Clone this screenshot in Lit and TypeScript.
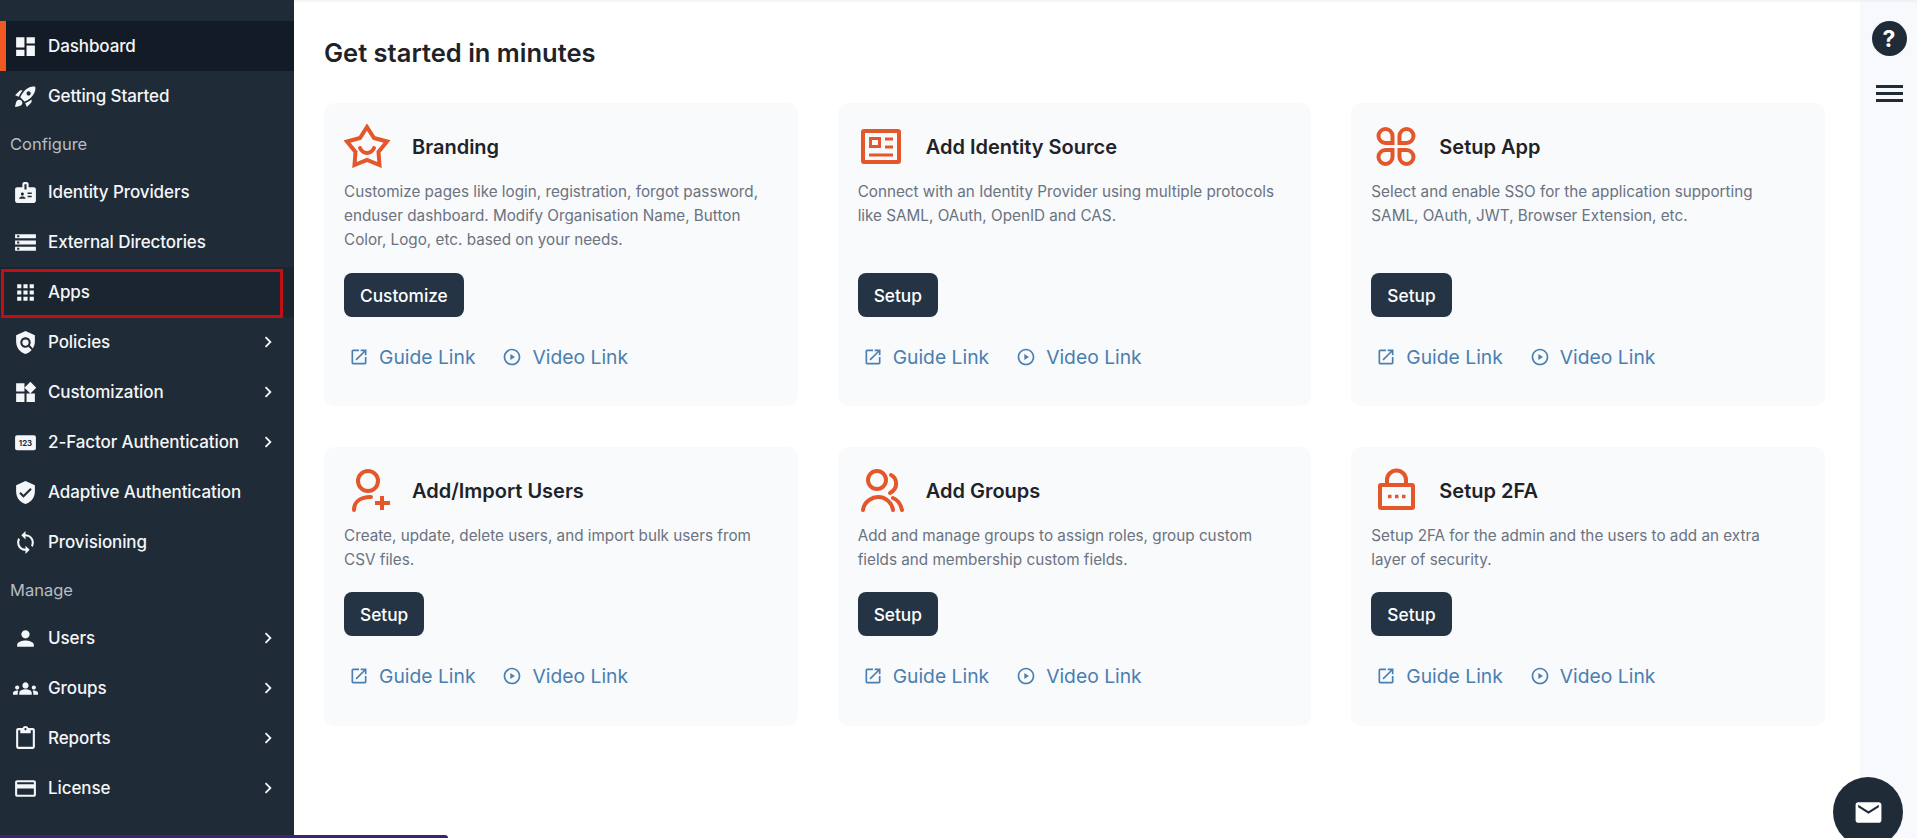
import { LitElement, html, css, svg } from 'lit';
import { customElement } from 'lit/decorators.js';

// material style nav icons, 24 box
const p = (d: string) => svg`<path d=${d}></path>`;
const navIcons: Record<string, unknown> = {
  dashboard: p('M3 13h8V3H3v10zm0 8h8v-6H3v6zm10 0h8V11h-8v10zm0-18v6h8V3h-8z'),
  rocket: p('M9.19 6.35c-2.04 2.29-3.44 5.58-3.57 5.89L2 10.69l4.05-4.05c.47-.47 1.15-.68 1.81-.55l1.33.26zM11.17 17s3.74-1.55 5.89-3.7c5.4-5.4 4.5-9.62 4.21-10.57-.95-.3-5.17-1.19-10.57 4.21C8.55 9.09 7 12.83 7 12.83L11.17 17zm6.48-2.19c-2.29 2.04-5.58 3.44-5.89 3.57L13.31 22l4.05-4.05c.47-.47.68-1.15.55-1.81l-.26-1.33zM9 18c0 .83-.34 1.58-.88 2.12C6.94 21.3 2 22 2 22s.7-4.94 1.88-6.12C4.42 15.34 5.17 15 6 15c1.66 0 3 1.34 3 3zm4-9c0-1.1.9-2 2-2s2 .9 2 2-.9 2-2 2-2-.9-2-2z'),
  badge: p('M20 7h-5V4c0-1.1-.9-2-2-2h-2c-1.1 0-2 .9-2 2v3H4c-1.1 0-2 .9-2 2v11c0 1.1.9 2 2 2h16c1.1 0 2-.9 2-2V9c0-1.1-.9-2-2-2zM9 12c.83 0 1.5.67 1.5 1.5S9.83 15 9 15s-1.5-.67-1.5-1.5S8.17 12 9 12zm3 6H6v-.75c0-1 2-1.5 3-1.5s3 .5 3 1.5V18zm1-9h-2V4h2v5zm5 7.5h-4V15h4v1.5zm0-3h-4V12h4v1.5z'),
  storage: p('M2 20h20v-4H2v4zm2-3h2v2H4v-2zM2 4v4h20V4H2zm4 3H4V5h2v2zm-4 7h20v-4H2v4zm2-3h2v2H4v-2z'),
  apps: p('M4 8h4V4H4v4zm6 12h4v-4h-4v4zm-6 0h4v-4H4v4zm0-6h4v-4H4v4zm6 0h4v-4h-4v4zm6-10v4h4V4h-4zm-6 4h4V4h-4v4zm6 6h4v-4h-4v4zm0 6h4v-4h-4v4z'),
  policy: svg`<path d="M21 5l-9-4-9 4v6c0 5.55 3.84 10.74 9 12 2.3-.56 4.33-1.9 5.88-3.71l-3.12-3.12c-1.94 1.29-4.58 1.07-6.29-.64-1.95-1.95-1.95-5.12 0-7.07 1.95-1.95 5.12-1.95 7.07 0 1.71 1.71 1.92 4.35.64 6.29l2.9 2.9C20.29 15.69 21 13.38 21 11V5z"></path><circle cx="12" cy="12" r="3"></circle>`,
  widgets: p('M13 13v8h8v-8h-8zM3 21h8v-8H3v8zM3 3v8h8V3H3zm13.66-1.31L11 7.34 16.66 13l5.66-5.66-5.66-5.65z'),
  pin: svg`<rect x="2" y="5" width="20" height="14.5" rx="2"></rect><text x="12" y="15" text-anchor="middle" font-size="7.5" font-weight="700" fill="#1f2b37" font-family="Inter, sans-serif">123</text>`,
  verified: p('M12 1L3 5v6c0 5.55 3.84 10.74 9 12 5.16-1.26 9-6.45 9-12V5l-9-4zm-2 16l-4-4 1.41-1.41L10 14.17l6.59-6.59L18 9l-8 8z'),
  sync: p('M12 4V1L8 5l4 4V6c3.31 0 6 2.69 6 6 0 1.01-.25 1.97-.7 2.8l1.46 1.46C19.54 15.03 20 13.57 20 12c0-4.42-3.58-8-8-8zm0 14c-3.31 0-6-2.69-6-6 0-1.01.25-1.97.7-2.8L5.24 7.74C4.46 8.97 4 10.43 4 12c0 4.42 3.58 8 8 8v3l4-4-4-4v3z'),
  person: p('M12 12c2.21 0 4-1.79 4-4s-1.79-4-4-4-4 1.79-4 4 1.79 4 4 4zm0 2c-2.67 0-8 1.34-8 4v2h16v-2c0-2.66-5.33-4-8-4z'),
  groups: p('M12 12.75c1.63 0 3.07.39 4.24.9 1.08.48 1.76 1.56 1.76 2.73V18H6v-1.61c0-1.18.68-2.26 1.76-2.73 1.17-.52 2.61-.91 4.24-.91zM4 13c1.1 0 2-.9 2-2s-.9-2-2-2-2 .9-2 2 .9 2 2 2zm1.13 1.1C4.76 14.04 4.39 14 4 14c-.99 0-1.93.21-2.78.58C.48 14.9 0 15.62 0 16.43V18h4.5v-1.61c0-.83.23-1.61.63-2.29zM20 13c1.1 0 2-.9 2-2s-.9-2-2-2-2 .9-2 2 .9 2 2 2zm4 3.43c0-.81-.48-1.53-1.22-1.85-.85-.37-1.79-.58-2.78-.58-.39 0-.76.04-1.13.1.4.68.63 1.46.63 2.29V18H24v-1.57zM12 6c1.66 0 3 1.34 3 3s-1.34 3-3 3-3-1.34-3-3 1.34-3 3-3z'),
  report: p('M19 2h-4.18C14.4.84 13.3 0 12 0c-1.3 0-2.4.84-2.82 2H5c-1.1 0-2 .9-2 2v16c0 1.1.9 2 2 2h14c1.1 0 2-.9 2-2V4c0-1.1-.9-2-2-2zm-7 0c.55 0 1 .45 1 1s-.45 1-1 1-1-.45-1-1 .45-1 1-1zm7 18H5V4h2v3h10V4h2v16z'),
  card: p('M20 4H4c-1.11 0-1.99.89-1.99 2L2 18c0 1.11.89 2 2 2h16c1.11 0 2-.89 2-2V6c0-1.11-.89-2-2-2zm0 14H4v-6h16v6zm0-10H4V6h16v2z'),
};

type NavEntry =
  | { heading: string }
  | { label: string; icon: string; more?: boolean; active?: boolean; marked?: boolean };

const nav: NavEntry[] = [
  { label: 'Dashboard', icon: 'dashboard', active: true },
  { label: 'Getting Started', icon: 'rocket' },
  { heading: 'Configure' },
  { label: 'Identity Providers', icon: 'badge' },
  { label: 'External Directories', icon: 'storage' },
  { label: 'Apps', icon: 'apps', marked: true },
  { label: 'Policies', icon: 'policy', more: true },
  { label: 'Customization', icon: 'widgets', more: true },
  { label: '2-Factor Authentication', icon: 'pin', more: true },
  { label: 'Adaptive Authentication', icon: 'verified' },
  { label: 'Provisioning', icon: 'sync' },
  { heading: 'Manage' },
  { label: 'Users', icon: 'person', more: true },
  { label: 'Groups', icon: 'groups', more: true },
  { label: 'Reports', icon: 'report', more: true },
  { label: 'License', icon: 'card', more: true },
];

// orange card icons, drawn from the left edge of the card content
const cardIcons: Record<string, unknown> = {
  star: svg`<path d="M23 3l7 11 13 3.500-8.500 10.500 1 13-12.500-5-12.500 5 1-13L3 17.500 16 14z" stroke-linejoin="miter"></path><path d="M16 24c3 6.500 11 6.500 14 0" stroke-linecap="round"></path>`,
  idcard: svg`<rect x="5" y="7" width="36" height="31" rx="1"></rect><rect x="12.500" y="14.500" width="9" height="8" stroke-width="3"></rect><path d="M27 15h8M27 23h8M11 31h24" stroke-width="3"></path>`,
  petals: svg`<g transform="translate(5 2.500)">
    ${[
      '',
      'translate(40 0) scale(-1 1)',
      'translate(0 40) scale(1 -1)',
      'translate(40 40) scale(-1 -1)',
    ].map((t) => svg`<path transform=${t} d="M16.500 16.500H9.500a7 7 0 1 1 7-7z"></path>`)}
  </g>`,
  useradd: svg`<circle cx="24" cy="13" r="10"></circle><path d="M10 42c0-8 6-13 17-13" stroke-linecap="round"></path><path d="M31 35h15M38 28v14"></path>`,
  users: svg`<circle cx="19" cy="12" r="9"></circle><path d="M33 7c6 3 8 13-1 18" stroke-linecap="round"></path><path d="M5 42c1-9 10-13 15-13 8 0 14 6 15 13" stroke-linecap="round"></path><path d="M35 30c5 2 8 7 9 12" stroke-linecap="round"></path>`,
  lock: svg`<rect x="9" y="17" width="33" height="23" rx="1"></rect><path d="M16 16v-4a9.500 9.500 0 0 1 19 0v4"></path><path d="M17 28.500h3.500M24 28.500h3.500M31 28.500h3.500" stroke-width="3.500"></path>`,
};

// line breaks follow the design, the copy is set by hand
const cards = [
  {
    icon: 'star',
    title: 'Branding',
    text: 'Customize pages like login, registration, forgot password,\nenduser dashboard. Modify Organisation Name, Button\nColor, Logo, etc. based on your needs.',
    action: 'Customize',
  },
  {
    icon: 'idcard',
    title: 'Add Identity Source',
    text: 'Connect with an Identity Provider using multiple protocols\nlike SAML, OAuth, OpenID and CAS.',
    action: 'Setup',
  },
  {
    icon: 'petals',
    title: 'Setup App',
    text: 'Select and enable SSO for the application supporting\nSAML, OAuth, JWT, Browser Extension, etc.',
    action: 'Setup',
  },
  {
    icon: 'useradd',
    title: 'Add/Import Users',
    text: 'Create, update, delete users, and import bulk users from\nCSV files.',
    action: 'Setup',
  },
  {
    icon: 'users',
    title: 'Add Groups',
    text: 'Add and manage groups to assign roles, group custom\nfields and membership custom fields.',
    action: 'Setup',
  },
  {
    icon: 'lock',
    title: 'Setup 2FA',
    text: 'Setup 2FA for the admin and the users to add an extra\nlayer of security.',
    action: 'Setup',
  },
];

@customElement('app-root')
export class AppRoot extends LitElement {
  static styles = css`
    :host {
      display: flex;
      position: relative;
      height: 100vh;
      overflow: hidden;
      background: #fff;
      font-family: Inter, 'Noto Sans', sans-serif;
    }

    /* Sidebar */
    .sidebar {
      flex: 0 0 294px;
      padding-top: 21px;
      box-sizing: border-box;
      background: #1f2b37;
      color: #f4f6f8;
    }
    .nav-item {
      position: relative;
      display: flex;
      align-items: center;
      height: 50px;
      padding: 0 15px 0 13px;
      font-size: 17px;
      font-weight: 500;
    }
    .nav-item svg {
      flex: none;
      fill: currentColor;
    }
    .nav-item .label {
      margin-left: 10px;
      white-space: nowrap;
      letter-spacing: -0.1px;
    }
    .nav-item .chevron {
      margin-left: auto;
    }
    .nav-item--active {
      background: #131c26;
      box-shadow: inset 6px 0 0 #f05a22;
    }
    .nav-item--marked {
      background: #1a2530;
    }
    .nav-item--marked::after {
      content: '';
      position: absolute;
      left: 1px;
      right: 11px;
      top: 2px;
      bottom: -1px;
      border: 3px solid #c20e16;
    }
    .nav-heading {
      display: flex;
      align-items: center;
      height: 46px;
      padding-left: 10px;
      font-size: 16.500px;
      color: #b7bdc3;
    }

    /* Main column */
    .main {
      flex: 1;
      min-width: 0;
      padding: 38px 35px 0 30px;
      box-shadow: inset 0 3px 3px -2px #ececec;
    }
    h1 {
      margin: 0 0 35px;
      font-size: 25.500px;
      line-height: 30px;
      font-weight: 600;
      color: #1f2328;
    }
    .grid {
      display: grid;
      grid-template-columns: repeat(3, 1fr);
      gap: 41px 40px;
    }
    .card {
      display: flex;
      flex-direction: column;
      padding: 21px 20px 37px;
      border-radius: 10px;
      background: #f8fafc;
    }
    .card:nth-child(n + 4) {
      padding-bottom: 38px;
    }
    .card-head {
      display: flex;
      align-items: center;
      gap: 20px;
      height: 44px;
      margin-bottom: 12px;
    }
    .card-head svg {
      flex: none;
      fill: none;
      stroke: #e4572a;
      stroke-width: 4;
    }
    .card-head h2 {
      margin: 2px 0 0;
      font-size: 20px;
      font-weight: 600;
      color: #1f2328;
    }
    .card p {
      flex: 1;
      margin: 0 0 21px;
      font-size: 15.250px;
      line-height: 24px;
      color: #6b7280;
      white-space: pre;
    }
    .card:nth-child(n + 4) p {
      margin-bottom: 20px;
    }
    .btn {
      align-self: flex-start;
      height: 44px;
      padding: 0 16px;
      border: none;
      border-radius: 8px;
      background: #243444;
      color: #fff;
      font: inherit;
      font-size: 17.300px;
      font-weight: 500;
    }
    .links {
      display: flex;
      align-items: center;
      height: 24px;
      margin-top: 28px;
      padding-left: 5px;
      font-size: 19.300px;
      color: #4a7fb0;
    }
    .links a {
      display: flex;
      align-items: center;
      gap: 10px;
      margin-right: 27px;
    }
    .links svg {
      fill: currentColor;
    }

    /* Right rail */
    .rail {
      flex: 0 0 57px;
      display: flex;
      flex-direction: column;
      align-items: center;
      padding: 21px 0 0 1px;
      box-sizing: border-box;
      background: #f7f9fc;
      box-shadow: inset 0 3px 3px -2px #ececec;
    }
    .help {
      display: flex;
      align-items: center;
      justify-content: center;
      width: 35px;
      height: 35px;
      border-radius: 50%;
      background: #1f2b37;
      color: #fff;
      font-size: 23px;
      font-weight: 700;
    }
    .menu {
      display: flex;
      flex-direction: column;
      gap: 4px;
      margin-top: 29px;
    }
    .menu span {
      width: 27px;
      height: 3px;
      background: #1f2b37;
    }

    /* Overlays */
    .fab {
      position: absolute;
      right: 14px;
      top: 777px;
      display: flex;
      align-items: center;
      justify-content: center;
      width: 70px;
      height: 70px;
      border-radius: 50%;
      background: #1f2b37;
    }
    .fab svg {
      fill: #fff;
    }
    .strip {
      position: absolute;
      left: 0;
      bottom: 0;
      width: 448px;
      height: 3px;
      border-top-right-radius: 3px;
      background: #3d2468;
    }
  `;

  private renderNav(item: NavEntry) {
    if ('heading' in item) {
      return html`<div class="nav-heading">${item.heading}</div>`;
    }
    const classes = [
      'nav-item',
      item.active && 'nav-item--active',
      item.marked && 'nav-item--marked',
    ].filter(Boolean).join(' ');
    return html`
      <div class=${classes}>
        <svg width="25" height="25" viewBox="0 0 24 24">${navIcons[item.icon]}</svg>
        <span class="label">${item.label}</span>
        ${item.more
          ? html`<svg class="chevron" width="22" height="22" viewBox="0 0 24 24"><path d="M8.590 16.590L13.170 12 8.590 7.410 10 6l6 6-6 6z"></path></svg>`
          : null}
      </div>
    `;
  }

  private renderCard(card: (typeof cards)[number]) {
    return html`
      <div class="card">
        <div class="card-head">
          <svg width="48" height="44" viewBox="0 0 48 44">${cardIcons[card.icon]}</svg>
          <h2>${card.title}</h2>
        </div>
        <p>${card.text}</p>
        <button class="btn">${card.action}</button>
        <div class="links">
          <a>
            <svg width="20" height="20" viewBox="0 0 24 24"><path d="M19 19H5V5h7V3H5c-1.110 0-2 .9-2 2v14c0 1.100.89 2 2 2h14c1.100 0 2-.9 2-2v-7h-2v7zM14 3v2h3.590l-9.830 9.830 1.410 1.410L19 6.410V10h2V3h-7z"></path></svg>
            Guide Link
          </a>
          <a>
            <svg width="20" height="20" viewBox="0 0 24 24"><path d="M10 15.500l5.500-3.500-5.500-3.500v7zM12 2C6.480 2 2 6.480 2 12s4.480 10 10 10 10-4.480 10-10S17.520 2 12 2zm0 18c-4.410 0-8-3.590-8-8s3.590-8 8-8 8 3.590 8 8-3.590 8-8 8z"></path></svg>
            Video Link
          </a>
        </div>
      </div>
    `;
  }

  render() {
    return html`
      <aside class="sidebar">${nav.map((item) => this.renderNav(item))}</aside>
      <main class="main">
        <h1>Get started in minutes</h1>
        <div class="grid">${cards.map((card) => this.renderCard(card))}</div>
      </main>
      <div class="rail">
        <div class="help">?</div>
        <div class="menu"><span></span><span></span><span></span></div>
      </div>
      <div class="fab">
        <svg width="31" height="31" viewBox="0 0 24 24"><path d="M20 4H4c-1.100 0-1.990.9-1.990 2L2 18c0 1.100.9 2 2 2h16c1.100 0 2-.9 2-2V6c0-1.100-.9-2-2-2zm0 4l-8 5-8-5V6l8 5 8-5v2z"></path></svg>
      </div>
      <div class="strip"></div>
    `;
  }
}
